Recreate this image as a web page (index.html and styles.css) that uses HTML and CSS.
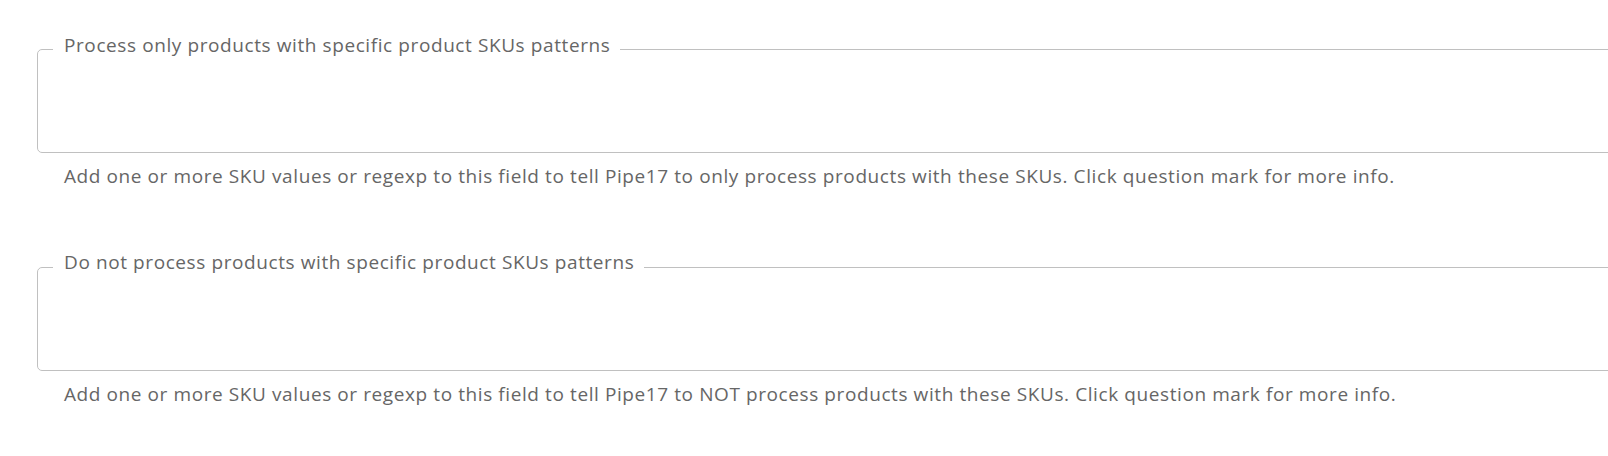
FILE: index.html
```html
<!DOCTYPE html>
<html lang="en">
<head>
<meta charset="utf-8">
<title>SKU filters</title>
<link rel="stylesheet" href="styles.css">
</head>
<body>
<div class="page">
  <div class="field">
    <fieldset class="box">
      <legend class="label">Process only products with specific product SKUs patterns</legend>
      <div class="input"></div>
    </fieldset>
    <p class="helper">Add one or more SKU values or regexp to this field to tell Pipe17 to only process products with these SKUs. Click question mark for more info.</p>
  </div>
  <div class="field">
    <fieldset class="box">
      <legend class="label">Do not process products with specific product SKUs patterns</legend>
      <div class="input"></div>
    </fieldset>
    <p class="helper">Add one or more SKU values or regexp to this field to tell Pipe17 to NOT process products with these SKUs. Click question mark for more info.</p>
  </div>
</div>
</body>
</html>
```

FILE: styles.css
```css
html, body {
  margin: 0;
  padding: 0;
  background: #ffffff;
  overflow: hidden;
}
body {
  font-family: "Open Sans", "Noto Sans", sans-serif;
  color: #666666;
}
.page {
  padding: 34.5px 0 0 37px;
  width: 1620px;
  display: flex;
  flex-direction: column;
  gap: 64px;
}
.field {
  display: flex;
  flex-direction: column;
}
.box {
  margin: 0;
  border: 1px solid #c0c0c0;
  border-radius: 5px;
  padding: 0 15px;
  min-width: 0;
}
.label {
  padding: 0 10px 10px 11px;
  font-size: 19px;
  line-height: 20px;
  letter-spacing: 0.59px;
  color: #666666;
}
.input {
  height: 87.5px;
}
.helper {
  margin: 11px 0 0 27px;
  font-size: 19px;
  line-height: 24px;
  letter-spacing: 0.59px;
  color: #666666;
}
```
